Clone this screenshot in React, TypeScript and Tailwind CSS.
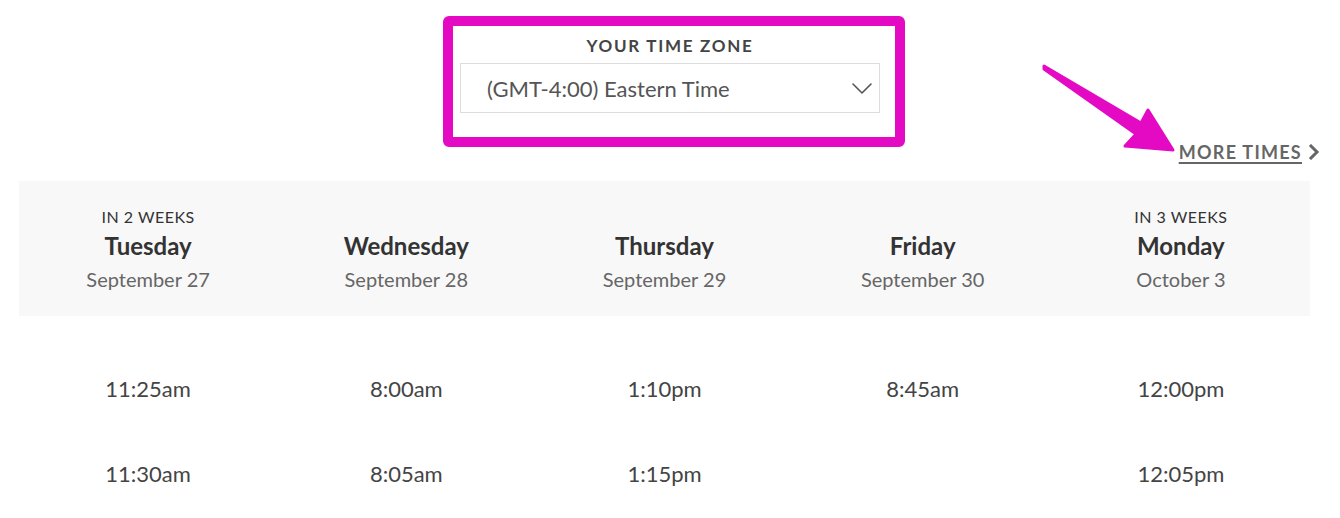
const days = [
  { tag: "IN 2 WEEKS", day: "Tuesday", date: "September 27", times: ["11:25am", "11:30am"] },
  { tag: "", day: "Wednesday", date: "September 28", times: ["8:00am", "8:05am"] },
  { tag: "", day: "Thursday", date: "September 29", times: ["1:10pm", "1:15pm"] },
  { tag: "", day: "Friday", date: "September 30", times: ["8:45am", ""] },
  { tag: "IN 3 WEEKS", day: "Monday", date: "October 3", times: ["12:00pm", "12:05pm"] },
];

export default function App() {
  return (
    <div
      className="relative w-[1340px] h-[518px] overflow-hidden bg-white text-[#333]"
      style={{ fontFamily: "'Source Sans Pro', Lato, 'Noto Sans', sans-serif" }}
    >
      {/* Header: time zone picker + more times link */}
      <div className="grid grid-cols-[1fr_auto_1fr] items-end pt-4">
        <div />
        <div className="ml-2 w-[462px] h-[131px] mb-4 border-[10px] border-[#e40ac4] rounded-md bg-white pl-[7px] pr-[15px] pt-[9px]">
          <p className="text-center text-[17px] leading-[22px] font-bold tracking-[0.1em] text-[#444]">YOUR TIME ZONE</p>
          <div className="mt-[6px] h-[50px] border border-[#dcdcdc] flex items-center pl-[26px] pr-[7px]">
            <span className="flex-1 text-[22px] text-[#555]">(GMT-4:00) Eastern Time</span>
            <svg className="w-[20px] h-[11px]" viewBox="0 0 20 11" fill="none" stroke="#555" strokeWidth={1.6} strokeLinecap="round" strokeLinejoin="round">
              <path d="M1 1l9 9 9-9" />
            </svg>
          </div>
        </div>
        <div className="flex justify-end pr-5">
          <a href="#" className="flex items-center gap-[6px] text-[18px] leading-[22px] font-bold tracking-[0.07em] text-[#666] underline underline-offset-[3px] decoration-[2px]">
            MORE TIMES
            <svg className="w-[12px] h-[16px]" viewBox="0 0 12 16" fill="none" stroke="#666" strokeWidth={3} strokeLinecap="square">
              <path d="M3 2l6 6-6 6" />
            </svg>
          </a>
        </div>
      </div>

      {/* Day headers */}
      <div className="mt-[18px] ml-[19px] mr-[30px] bg-[#f8f8f8] grid grid-cols-5 pt-[26px] pb-6">
        {days.map((d) => (
          <div key={d.day} className="flex flex-col items-center">
            <div className="h-5 text-[16px] leading-5 tracking-[0.03em] text-[#333]">{d.tag}</div>
            <div className="mt-[5px] h-7 text-[24px] leading-7 font-bold text-[#333]">{d.day}</div>
            <div className="mt-[6px] h-[26px] text-[20px] leading-[26px] text-[#666]">{d.date}</div>
          </div>
        ))}
      </div>

      {/* Times */}
      <div className="ml-[19px] mr-[30px] grid grid-cols-5 pt-[30px]">
        {days.map((d) => (
          <div key={d.day} className="flex flex-col">
            {d.times.map((t, i) => (
              <div key={i} className="h-[85px] flex items-center justify-center text-[22px] text-[#444]">{t}</div>
            ))}
          </div>
        ))}
      </div>

      {/* Annotation arrow */}
      <svg className="absolute left-0 top-0 pointer-events-none" width="1340" height="518">
        <polygon
          points="1044,66 1141,123 1148,110 1173,150 1125,146 1136,134 1044,69"
          fill="#e40ac4"
          stroke="#e40ac4"
          strokeWidth={3}
          strokeLinejoin="round"
        />
      </svg>
    </div>
  );
}
